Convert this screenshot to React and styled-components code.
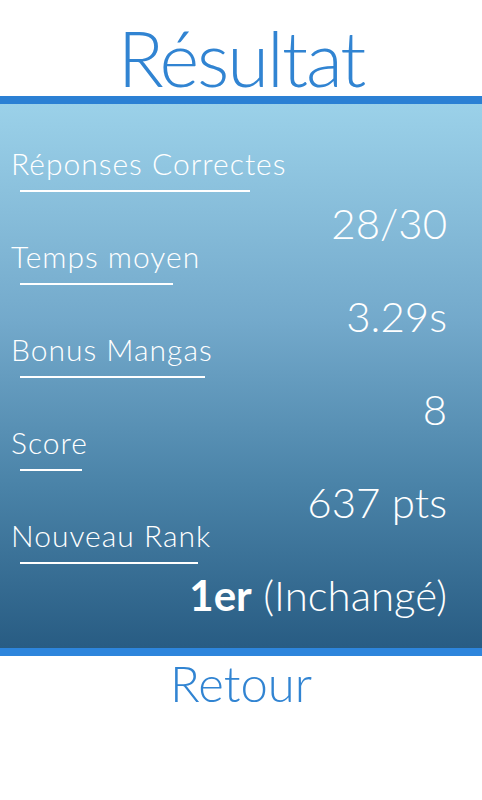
import styled, { createGlobalStyle } from "styled-components";

const stats = [
  { label: "Réponses Correctes", line: 230, value: "28/30" },
  { label: "Temps moyen", line: 153, value: "3.29s" },
  { label: "Bonus Mangas", line: 185, value: "8" },
  { label: "Score", line: 62, value: "637 pts" },
  { label: "Nouveau Rank", line: 178, value: null },
];

export default function App() {
  return (
    <>
      <GlobalStyle />
      <Page>
        <Title>Résultat</Title>
        <Panel>
          {stats.map(stat => (
            <StatRow key={stat.label}>
              <StatLabel>{stat.label}</StatLabel>
              <Underline width={stat.line} />
              <StatValue>
                {stat.value || (
                  <>
                    <Strong>1er</Strong> (Inchangé)
                  </>
                )}
              </StatValue>
            </StatRow>
          ))}
        </Panel>
        <BackButton>Retour</BackButton>
      </Page>
    </>
  );
}

const GlobalStyle = createGlobalStyle`
  body {
    margin: 0;
    background: #fff;
    font-family: Lato, "Open Sans", sans-serif;
  }
`;

const Page = styled.div`
  width: 482px;
  height: 800px;
  background: #fff;
`;

const Title = styled.h1`
  margin: 0;
  padding-top: 20px;
  height: 76px;
  line-height: 76px;
  text-align: center;
  font-size: 76px;
  font-weight: 300;
  letter-spacing: -2px;
  color: #3184d2;
`;

const Panel = styled.div`
  border-top: 8px solid #2b80d4;
  border-bottom: 8px solid #2d85dc;
  height: 544px;
  background: linear-gradient(to bottom, #9bd1e9 0%, #73a9cb 40%, #4a83a8 70%, #285c83 100%);
  display: flex;
  flex-direction: column;
`;

const StatRow = styled.div`
  display: flex;
  flex-direction: column;
  height: 93px;
  &:first-child {
    margin-top: 46px;
  }
`;

const StatLabel = styled.div`
  padding-left: 11px;
  font-size: 30px;
  line-height: 26px;
  font-weight: 300;
  letter-spacing: 1px;
  color: #fff;
  white-space: nowrap;
`;

const Underline = styled.div`
  margin: 14px 0 0 20px;
  width: ${props => props.width}px;
  height: 2px;
  background: #fff;
`;

const StatValue = styled.div`
  margin-top: 11px;
  padding-right: 35px;
  text-align: right;
  font-size: 42px;
  line-height: 40px;
  font-weight: 300;
  color: #fff;
  white-space: nowrap;
`;

const Strong = styled.span`
  font-weight: 700;
`;

const BackButton = styled.div`
  text-align: center;
  font-size: 49px;
  line-height: 54px;
  font-weight: 300;
  color: #3184d2;
  cursor: pointer;
`;
